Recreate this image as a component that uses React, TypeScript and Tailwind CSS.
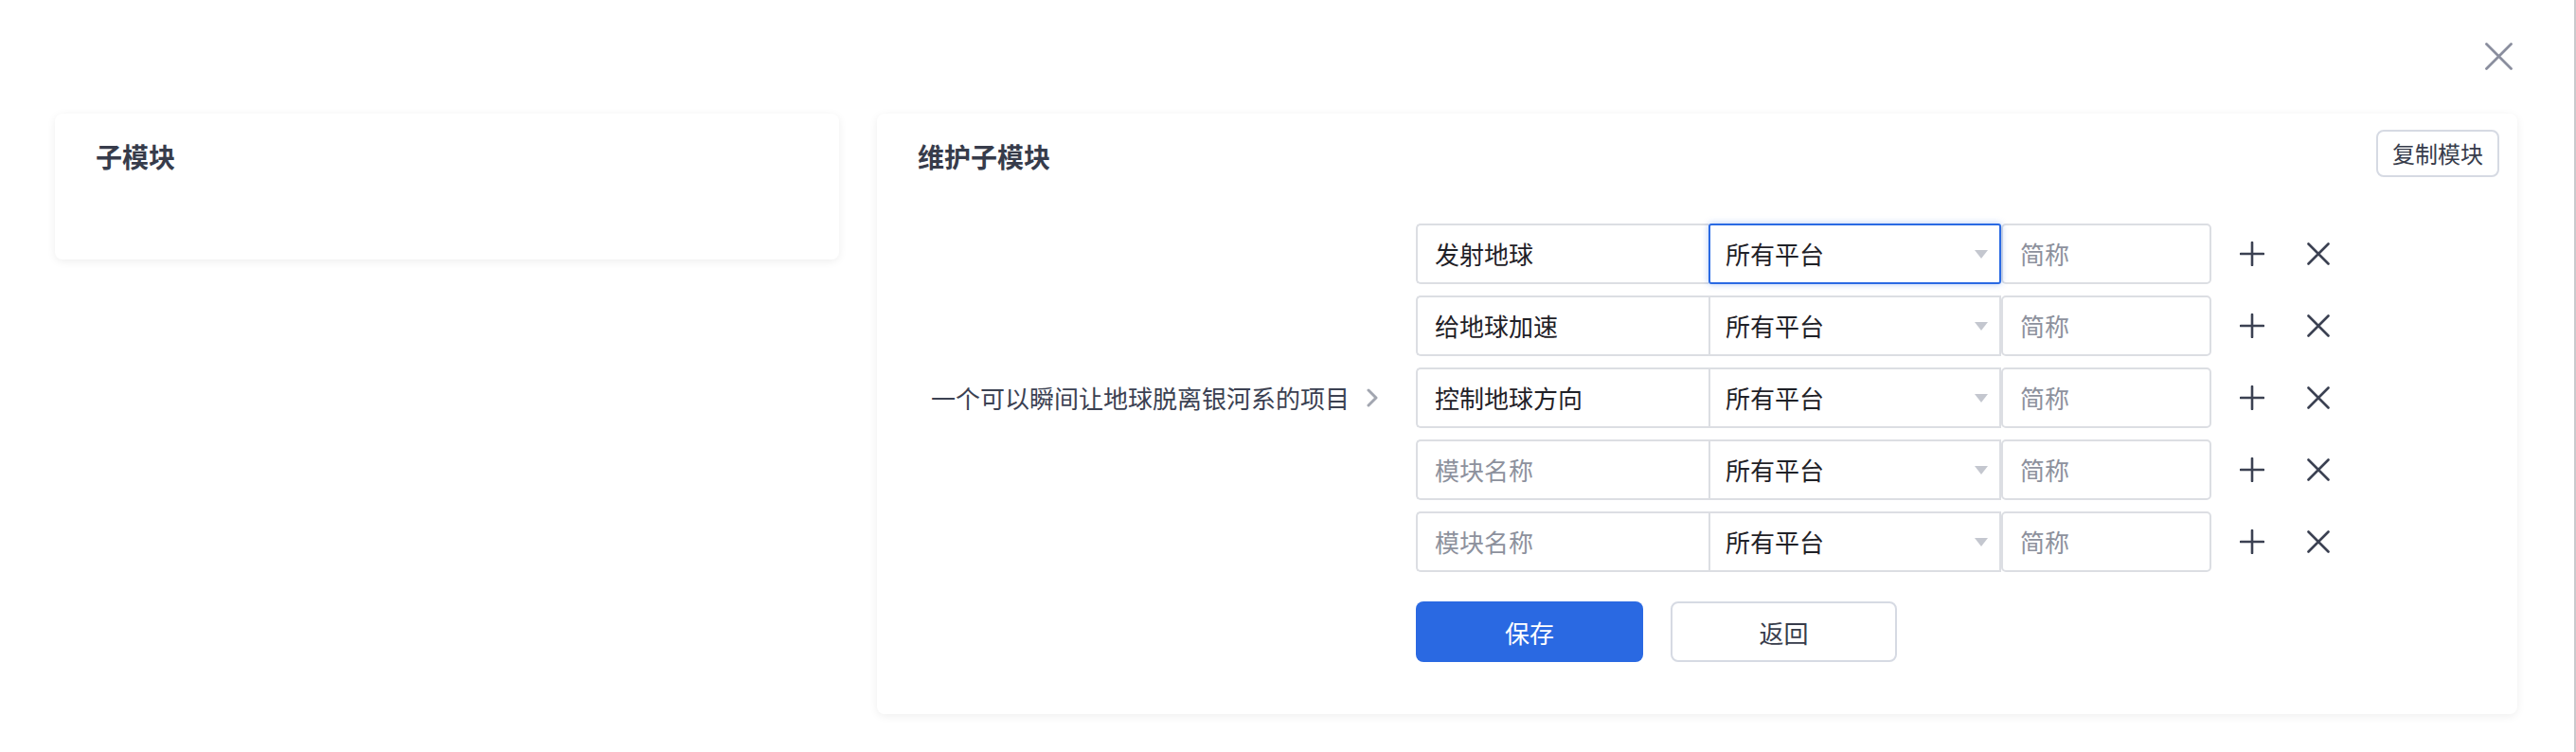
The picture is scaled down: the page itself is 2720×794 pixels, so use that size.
import React from "react";

const FONT = { fontFamily: '"Noto Sans CJK SC", "Noto Sans", sans-serif' };

type Row = { name: string; placeholder?: boolean; focused?: boolean };

const rows: Row[] = [
  { name: "发射地球", focused: true },
  { name: "给地球加速" },
  { name: "控制地球方向" },
  { name: "模块名称", placeholder: true },
  { name: "模块名称", placeholder: true },
];

function Caret() {
  return (
    <svg width="14" height="9" viewBox="0 0 14 9" className="shrink-0">
      <path d="M0 0 L14 0 L7 9 Z" fill="#c4c7cf" />
    </svg>
  );
}

function PlusIcon() {
  return (
    <svg width="26" height="26" viewBox="0 0 26 26">
      <path d="M13 1 V25 M1 13 H25" stroke="#3b4152" strokeWidth="2.6" strokeLinecap="round" />
    </svg>
  );
}

function XIcon({ size = 24, color = "#3b4152", sw = 2.6 }: { size?: number; color?: string; sw?: number }) {
  return (
    <svg width={size} height={size} viewBox={`0 0 ${size} ${size}`}>
      <path
        d={`M1.5 1.5 L${size - 1.5} ${size - 1.5} M${size - 1.5} 1.5 L1.5 ${size - 1.5}`}
        stroke={color}
        strokeWidth={sw}
        strokeLinecap="round"
      />
    </svg>
  );
}

function Chevron() {
  return (
    <svg width="12" height="20" viewBox="0 0 12 20">
      <path d="M2 2 L10 10 L2 18" stroke="#a2a6b0" strokeWidth="3" fill="none" strokeLinecap="round" strokeLinejoin="round" />
    </svg>
  );
}

function FormRow({ row }: { row: Row }) {
  return (
    <div className="flex items-center h-[64px]">
      <div className="w-[309px] h-full flex items-center pl-[18px] border-2 border-r-0 border-[#dcdee3] rounded-l-[5px] bg-white">
        <span className={`text-[26px] leading-none ${row.placeholder ? "text-[#8d919d]" : "text-[#1f2127]"}`}>
          {row.name}
        </span>
      </div>
      <div
        className={`relative w-[309px] h-full flex items-center justify-between pl-[16px] pr-[12px] border-2 bg-white ${
          row.focused
            ? "border-[#2a6ae3] rounded-[3px] shadow-[0_0_7px_rgba(42,106,227,0.35)] z-10"
            : "border-[#dcdee3]"
        }`}
      >
        <span className="text-[26px] leading-none text-[#1f2127]">所有平台</span>
        <Caret />
      </div>
      <div className="w-[222px] h-full flex items-center pl-[18px] border-2 border-[#dcdee3] rounded-[5px] bg-white">
        <span className="text-[26px] leading-none text-[#8d919d]">简称</span>
      </div>
      <div className="ml-[30px] flex items-center">
        <PlusIcon />
      </div>
      <div className="ml-[45px] flex items-center">
        <XIcon />
      </div>
    </div>
  );
}

export default function App() {
  return (
    <div className="w-full h-[794px] bg-white border-r-2 border-[#c9c9cc] box-border" style={FONT}>
      <div className="h-[120px] flex justify-end items-start pt-[45px] pr-[65px]">
        <button className="w-[29px] h-[29px] flex items-center justify-center">
          <XIcon size={29} color="#8a8e9e" sw={2.8} />
        </button>
      </div>
      <div className="flex items-start gap-[40px] pl-[58px] pr-[60px]">
        <div className="w-[828px] h-[154px] shrink-0 bg-white rounded-[8px] shadow-[0_2px_10px_rgba(0,0,0,0.07)] pl-[43px] pt-[25px]">
          <h2 className="text-[28px] leading-[40px] font-bold text-[#373c4b]">子模块</h2>
        </div>
        <div className="flex-1 bg-white rounded-[8px] shadow-[0_2px_10px_rgba(0,0,0,0.07)] pb-[55px]">
          <div className="flex justify-between items-start pl-[43px] pr-[19px] pt-[17px]">
            <h2 className="mt-[8px] text-[28px] leading-[40px] font-bold text-[#373c4b]">维护子模块</h2>
            <button className="w-[130px] h-[50px] border-2 border-[#d6dae3] rounded-[8px] text-[24px] text-[#373c4b] flex items-center justify-center bg-white">
              复制模块
            </button>
          </div>
          <div className="mt-[49px] grid grid-cols-[569px_auto] gap-y-[31px]">
            <div className="self-center flex items-center justify-end pr-[40px] gap-[18px]">
              <span className="text-[26px] leading-none text-[#3b4152] whitespace-nowrap">一个可以瞬间让地球脱离银河系的项目</span>
              <Chevron />
            </div>
            <div className="flex flex-col gap-[12px]">
              {rows.map((r, i) => (
                <FormRow key={i} row={r} />
              ))}
            </div>
            <div />
            <div className="flex items-center gap-[29px]">
              <button className="w-[240px] h-[64px] rounded-[8px] bg-[#2a69e2] text-white text-[26px] flex items-center justify-center">
                保存
              </button>
              <button className="w-[239px] h-[64px] rounded-[8px] border-2 border-[#d6dae3] bg-white text-[#373c4b] text-[26px] flex items-center justify-center">
                返回
              </button>
            </div>
          </div>
        </div>
      </div>
    </div>
  );
}
